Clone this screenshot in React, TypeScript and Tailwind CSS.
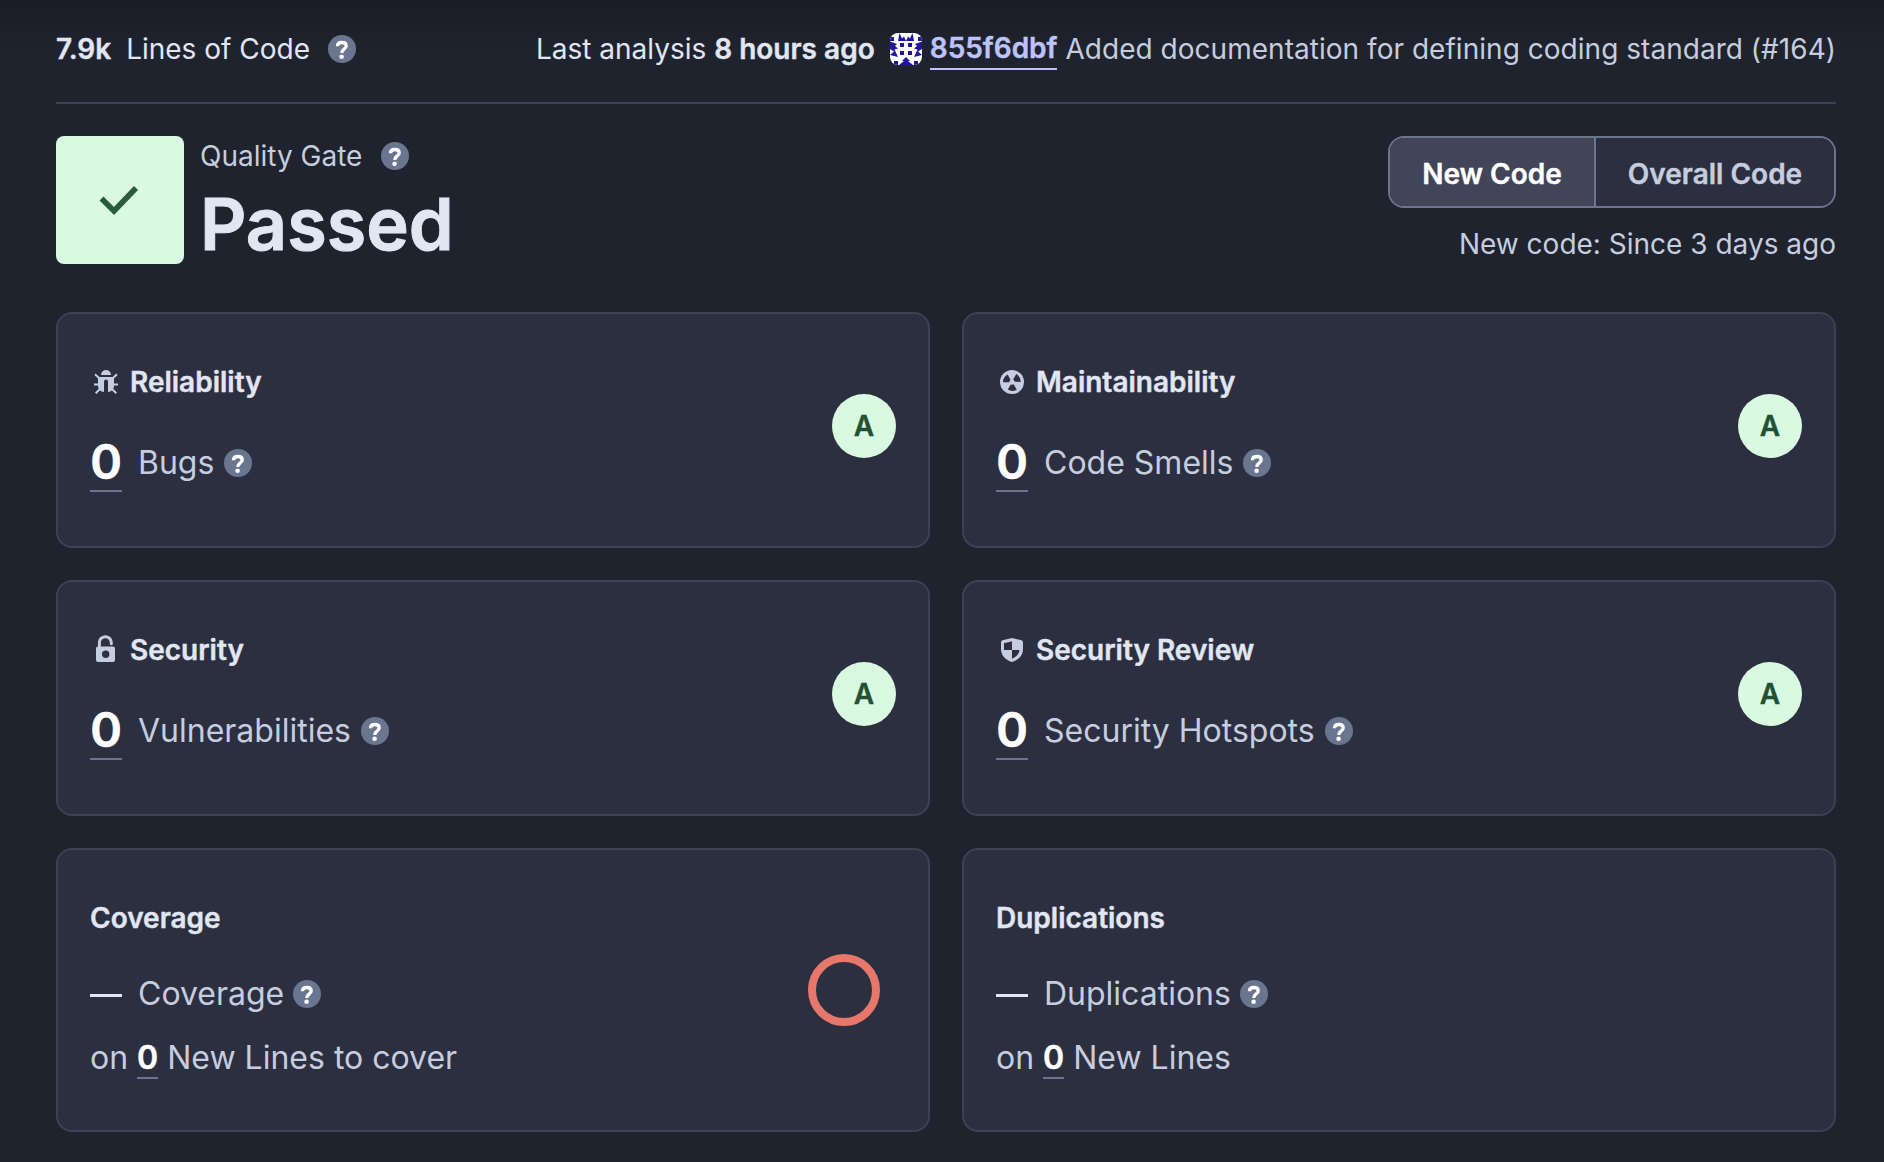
import React from "react";

function Help({ className = "" }: { className?: string }) {
  return (
    <span className={`inline-flex h-7 w-7 shrink-0 items-center justify-center rounded-full bg-[#6a7590] ${className}`}>
      <svg viewBox="0 0 28 28" className="h-7 w-7" fill="none">
        <path d="M9.500 11.200C9.500 8.900 11.300 7.500 13.900 7.500c2.600 0 4.300 1.300 4.300 3.400 0 1.500-.9 2.300-2.200 3.200-1.500 1-2.200 1.700-2.200 3.900" stroke="#fff" strokeWidth="3.300" />
        <circle cx="13.600" cy="21.700" r="2.300" fill="#fff" />
      </svg>
    </span>
  );
}

function BugIcon() {
  return (
    <svg viewBox="0 0 24 24" className="h-6 w-6">
      <path d="M7 5a5 5 0 0 1 10 0z" fill="#c5cddf" />
      <path d="M4 7h16v9c0 2.500-2.600 6-6 6V11.500a2 2 0 0 0-4 0V22c-3.400 0-6-3.500-6-6z" fill="#c5cddf" />
      <path d="M1 4.300l4 3.700M23 4.300L19 8M0 14.500h5M24 14.500h-5M1.700 23.200l4.300-4.200M22.300 23.200l-4.300-4.200" stroke="#c5cddf" strokeWidth="2" />
    </svg>
  );
}

function RadiationIcon() {
  const blade = "M10.500 9.700L7.600 4.600A8.800 8.800 0 0 0 3 12.300H9.200A3.200 3.200 0 0 1 10.500 9.700z";
  return (
    <svg viewBox="0 0 24 24" className="h-6 w-6">
      <circle cx="12" cy="12" r="12" fill="#c5cddf" />
      <g fill="#2c2f40">
        <path d={blade} />
        <path d={blade} transform="rotate(120 12 12)" />
        <path d={blade} transform="rotate(240 12 12)" />
      </g>
    </svg>
  );
}

function LockIcon() {
  return (
    <svg viewBox="0 0 32 32" className="h-8 w-8">
      <path d="M9.400 14V8.900a5.900 5.900 0 0 1 11.900-.6v1.500" stroke="#c5cddf" strokeWidth="3" strokeLinecap="round" fill="none" />
      <path fillRule="evenodd" d="M8 12.500h15a2 2 0 0 1 2 2V26a2 2 0 0 1-2 2H8a2 2 0 0 1-2-2V14.500a2 2 0 0 1 2-2zm7.700 4a3.700 3.700 0 1 0 0 7.400 3.700 3.700 0 0 0 0-7.400z" fill="#c5cddf" />
    </svg>
  );
}

function ShieldIcon() {
  return (
    <svg viewBox="0 0 24 24" className="h-6 w-6">
      <path fillRule="evenodd" d="M12 0l9.500 2.300a2 2 0 0 1 1.500 2V11c0 6.500-4.500 11-11 13C5.500 22 1 17.500 1 11V4.300a2 2 0 0 1 1.500-2zM12 3.200L4 5.300V12h8zM12 12v8.700c4.200-1.700 7.200-4.700 7.500-8.700z" fill="#c5cddf" />
    </svg>
  );
}

function Identicon() {
  const crown = "M8 8L9.500 0L12 5.500L14 3.500L16 8L18 3.500L20 5.500L22.500 0L24 8z";
  const side = "M0 8.500L7 11L5 13L8 15.500L4.500 16.500L8 24L0 22L4 18.500L0 16z";
  return (
    <svg viewBox="0 0 32 32" className="h-8 w-8 shrink-0 rounded-lg" fill="#2313a0">
      <rect width="32" height="32" fill="#fff" />
      <path d={crown} />
      <path d={side} />
      <path d={side} transform="matrix(-1 0 0 1 32 0)" />
      <path d="M0 4h4v4H0zM28 4h4v4h-4z" />
      <path d="M10 10h4v4h-4zM18 10h4v4h-4zM10 18h4v4h-4zM18 18h4v4h-4z" />
      <path d="M16 24l4 4h-2l5 4H9l5-4h-2z" />
      <path d="M4 28h4v4H4zM24 28h4v4h-4z" />
    </svg>
  );
}

function Card({ icon, title, aside, children }: { icon?: React.ReactNode; title: string; aside?: React.ReactNode; children: React.ReactNode }) {
  return (
    <section className="flex items-center justify-between rounded-2xl border-2 border-[#3e4155] bg-[#2c2f40] px-8">
      <div className="flex flex-col">
        <div className="flex h-10 items-center gap-2 text-[28px] font-semibold text-[#e1e6f3] [-webkit-text-stroke:0.4px]">
          {icon && <span className="flex h-8 w-8 items-center justify-center">{icon}</span>}
          {title}
        </div>
        {children}
      </div>
      {aside}
    </section>
  );
}

function RatingCard({ icon, title, label }: { icon: React.ReactNode; title: string; label: string }) {
  return (
    <Card
      icon={icon}
      title={title}
      aside={<span className="mt-[-8px] flex h-16 w-16 items-center justify-center rounded-full bg-[#d9f9e0] text-[28px] font-semibold text-[#215132] [-webkit-text-stroke:0.4px]">A</span>}
    >
      <div className="mt-[30px] mb-1.5 flex h-[60px] items-center">
        <span className="flex h-[60px] w-8 justify-center border-b-2 border-[#6a7590] text-[48px] font-semibold leading-[60px] text-white [-webkit-text-stroke:0.7px]">0</span>
        <span className="ml-4 pt-0.5 text-[32px] text-[#c5cddf]">{label}</span>
        <Help className="mt-0.5 ml-2.5" />
      </div>
    </Card>
  );
}

function LinesCard({ title, lines, aside }: { title: string; lines: string; aside?: React.ReactNode }) {
  return (
    <Card title={title} aside={aside}>
      <div className="mt-8 flex h-12 items-center text-[32px] text-[#c5cddf]">
        <span className="mt-0.5 h-[3px] w-8 bg-[#e1e6f3]" />
        <span className="ml-4">{title}</span>
        <Help className="ml-[9px]" />
      </div>
      <div className="mt-4 flex h-12 items-center gap-[9px] text-[32px] text-[#c5cddf]">
        <span>on</span>
        <span className="h-[42px] border-b-2 border-[#6a7590] font-semibold leading-[42px] text-white [-webkit-text-stroke:0.4px]">0</span>
        <span>{lines}</span>
      </div>
    </Card>
  );
}

export default function App() {
  return (
    <main className="h-[1162px] w-[1884px] overflow-hidden bg-[#1f232e] bg-linear-to-b from-[#1a1c27] to-[#1f232e] to-[48px] pr-12 pl-14 font-['Inter',sans-serif] text-[28px] leading-10 text-[#e1e6f3]">
      <div className="flex flex-col">
        <header className="flex h-[104px] items-start justify-between border-b-2 border-[#3e4155] pt-[29px]">
          <div className="flex h-10 items-center">
            <b className="font-semibold [-webkit-text-stroke:0.4px]">7.9k</b>
            <span className="ml-[15px]">Lines of Code</span>
            <Help className="ml-[18px]" />
          </div>
          <div className="flex h-10 items-center whitespace-nowrap">
            <span>Last analysis <b className="font-semibold [-webkit-text-stroke:0.4px]">8 hours ago</b></span>
            <span className="ml-[15px] flex"><Identicon /></span>
            <a className="ml-2 h-[42px] border-b-2 border-[#bdc3f8] font-semibold text-[#bdc3f8] [-webkit-text-stroke:0.4px]">855f6dbf</a>
            <span className="ml-2 tracking-[0.03px] text-[#c5cddf]">Added documentation for defining coding standard (#164)</span>
          </div>
        </header>
        <div className="mt-8 flex h-32 justify-between">
          <div className="flex gap-4">
            <div className="flex h-32 w-32 items-center justify-center rounded-lg bg-[#d9f9e0]">
              <svg viewBox="0 0 128 128" className="h-32 w-32" fill="none">
                <path d="M45.500 62.500L58 75 80 52" stroke="#285c3c" strokeWidth="5.600" />
              </svg>
            </div>
            <div className="flex flex-col">
              <div className="flex h-10 items-center text-[#c5cddf]">
                Quality Gate <Help className="ml-[19px]" />
              </div>
              <div className="mt-1 text-[72px] font-semibold leading-[88px] [-webkit-text-stroke:1px]">Passed</div>
            </div>
          </div>
          <div className="flex flex-col items-end">
            <div className="flex h-[72px] w-[448px] overflow-hidden rounded-2xl border-2 border-[#6a7590] font-semibold [-webkit-text-stroke:0.4px]">
              <div className="flex w-[206px] items-center justify-center border-r-2 border-[#6a7590] bg-[#424457] pt-1 text-white">New Code</div>
              <div className="flex flex-1 items-center justify-center bg-[#2c2f40] pt-1 text-[#c5cddf]">Overall Code</div>
            </div>
            <div className="mt-4 text-[#c5cddf]">New code: Since 3 days ago</div>
          </div>
        </div>
        <div className="mt-12 grid grid-cols-2 grid-rows-[236px_236px_284px] gap-8">
          <RatingCard icon={<BugIcon />} title="Reliability" label="Bugs" />
          <RatingCard icon={<RadiationIcon />} title="Maintainability" label="Code Smells" />
          <RatingCard icon={<LockIcon />} title="Security" label="Vulnerabilities" />
          <RatingCard icon={<ShieldIcon />} title="Security Review" label="Security Hotspots" />
          <LinesCard
            title="Coverage"
            lines="New Lines to cover"
            aside={<span className="mr-4 h-[72px] w-[72px] rounded-full border-8 border-[#e8776b]" />}
          />
          <LinesCard title="Duplications" lines="New Lines" />
        </div>
      </div>
    </main>
  );
}
